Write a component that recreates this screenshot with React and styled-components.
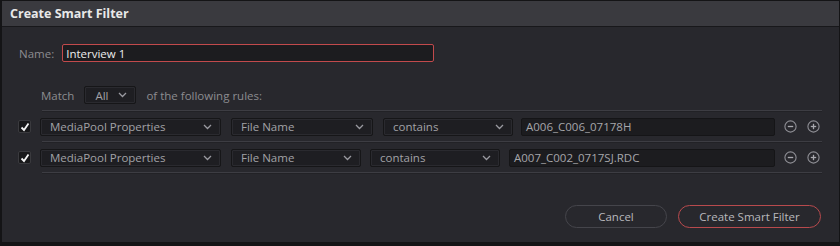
import React from "react";
import styled, { createGlobalStyle } from "styled-components";

const Global = createGlobalStyle`
  html, body { margin: 0; padding: 0; background: #1a1a1d; }
  body { font-family: "Open Sans", "Liberation Sans", sans-serif; }
`;

const Dialog = styled.div`
  width: 840px;
  height: 246px;
  box-sizing: border-box;
  background: #28282d;
  border: 1px solid #141416;
  border-bottom: 4px solid #141416;
  border-left-width: 2px;
  display: flex;
  flex-direction: column;
`;

const TitleBar = styled.div`
  height: 25px;
  background: #3a3a3f;
  border-bottom: 1px solid #18181b;
  display: flex;
  align-items: center;
  padding-left: 8px;
  color: #e8e8e8;
  font-weight: 700;
  font-size: 12.5px;
`;

const Body = styled.div`
  flex: 1;
  display: flex;
  flex-direction: column;
  padding: 17px 18px 0 16px;
`;

const Label = styled.span`
  color: #8c8c90;
  font-size: 11.5px;
`;

const NameRow = styled.div`
  display: flex;
  align-items: center;
  gap: 8px;
  padding-left: 1px;
`;

const NameInput = styled.div`
  width: 367px;
  height: 16px;
  border: 1px solid #c24a4c;
  border-radius: 2px;
  background: #1c1c1f;
  color: #ececec;
  font-size: 11.5px;
  display: flex;
  align-items: center;
  padding-left: 3px;
`;

const MatchRow = styled.div`
  display: flex;
  align-items: center;
  margin-top: 24px;
  margin-left: 23px;
  gap: 10px;
`;

const Rules = styled.div`
  display: flex;
  flex-direction: column;
  margin-top: 6px;
`;

const Separator = styled.div`
  margin-left: 24px;
  width: 780px;
  height: 1px;
  background: #3d3d43;
  border-bottom: 1px solid #222226;
`;

const RuleRow = styled.div`
  display: flex;
  align-items: center;
  height: 29px;
`;

const Check = styled.div`
  width: 13px;
  height: 13px;
  box-sizing: border-box;
  background: #18181a;
  border: 1px solid #3a3a3e;
  border-radius: 2px;
  margin-right: 9px;
  display: flex;
  align-items: center;
  justify-content: center;
`;

const Select = styled.div`
  width: ${(p) => p.$w}px;
  height: 18px;
  box-sizing: border-box;
  margin-right: ${(p) => p.$gap ?? 10}px;
  background: #1e1e22;
  border: 1px solid #161618;
  border-radius: 2px;
  box-shadow: inset 0 0 0 1px #2a2a2f;
  display: flex;
  align-items: center;
  justify-content: space-between;
  padding: 0 8px 0 ${(p) => p.$pl ?? 9}px;
  color: #a2a2a6;
  font-size: 11.5px;
`;

const TextField = styled.div`
  width: ${(p) => p.$w}px;
  height: 18px;
  box-sizing: border-box;
  background: #1c1c1f;
  border: 1px solid #151517;
  border-radius: 2px;
  display: flex;
  align-items: center;
  padding-left: 4px;
  color: #a6a6aa;
  font-size: 11.5px;
`;

const IconGroup = styled.div`
  display: flex;
  gap: 10px;
  margin-left: 9px;
`;

const Footer = styled.div`
  display: flex;
  justify-content: flex-end;
  gap: 11px;
  margin-top: auto;
  margin-bottom: 14px;
`;

const Button = styled.div`
  width: ${(p) => p.$w}px;
  height: 23px;
  box-sizing: border-box;
  border-radius: 12px;
  border: 1px solid ${(p) => (p.$primary ? "#b84a4d" : "#45454b")};
  display: flex;
  align-items: center;
  justify-content: center;
  color: #b8b8bc;
  font-size: 11.5px;
`;

const Chevron = () => (
  <svg width="9" height="6" viewBox="0 0 9 6">
    <path d="M1 1 L4.5 4.5 L8 1" fill="none" stroke="#9a9aa0" strokeWidth="1.3" />
  </svg>
);

const CheckMark = () => (
  <svg width="10" height="10" viewBox="0 0 10 10">
    <path d="M1.5 5.5 L4 8 L8.5 1.5" fill="none" stroke="#f4f4f4" strokeWidth="1.8" />
  </svg>
);

const RoundIcon = ({ plus }) => (
  <svg width="13" height="13" viewBox="0 0 13 13">
    <circle cx="6.5" cy="6.5" r="5.6" fill="none" stroke="#8e8e94" strokeWidth="1.1" />
    <path d="M3.8 6.5 H9.2" stroke="#a8a8ae" strokeWidth="1.3" />
    {plus && <path d="M6.5 3.8 V9.2" stroke="#a8a8ae" strokeWidth="1.3" />}
  </svg>
);

const rules = [
  { widths: [181, 142, 130, 254], gaps: [10, 10, 8], value: "A006_C006_07178H" },
  { widths: [181, 130, 130, 266], gaps: [10, 9, 9], value: "A007_C002_0717SJ.RDC" },
];

function Rule({ rule }) {
  const [a, b, c, d] = rule.widths;
  const [g1, g2, g3] = rule.gaps;
  return (
    <RuleRow>
      <Check>
        <CheckMark />
      </Check>
      <Select $w={a} $gap={g1}>
        MediaPool Properties <Chevron />
      </Select>
      <Select $w={b} $gap={g2}>
        File Name <Chevron />
      </Select>
      <Select $w={c} $gap={g3}>
        contains <Chevron />
      </Select>
      <TextField $w={d}>{rule.value}</TextField>
      <IconGroup>
        <RoundIcon />
        <RoundIcon plus />
      </IconGroup>
    </RuleRow>
  );
}

export default function App() {
  return (
    <>
      <Global />
      <Dialog>
        <TitleBar>Create Smart Filter</TitleBar>
        <Body>
          <NameRow>
            <Label>Name:</Label>
            <NameInput>Interview 1</NameInput>
          </NameRow>
          <MatchRow>
            <Label>Match</Label>
            <Select $w={52} $gap={0} $pl={10}>
              All <Chevron />
            </Select>
            <Label>of the following rules:</Label>
          </MatchRow>
          <Rules>
            <Separator />
            {rules.map((r, i) => (
              <React.Fragment key={i}>
                <Rule rule={r} />
                <Separator />
              </React.Fragment>
            ))}
          </Rules>
          <Footer>
            <Button $w={102}>Cancel</Button>
            <Button $w={143} $primary>
              Create Smart Filter
            </Button>
          </Footer>
        </Body>
      </Dialog>
    </>
  );
}
